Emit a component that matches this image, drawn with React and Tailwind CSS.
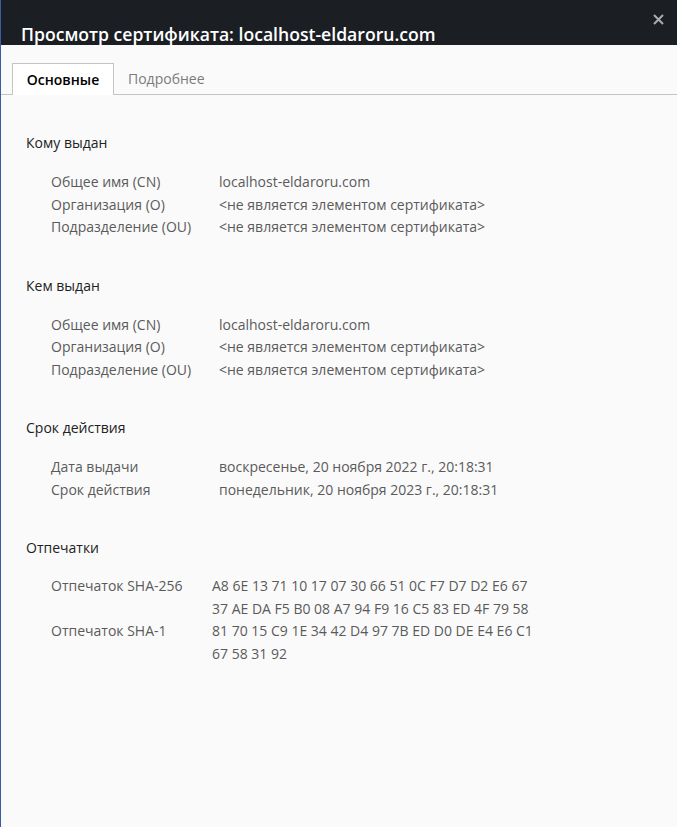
import React from 'react';

const sections = [
  {
    title: 'Кому выдан',
    rows: [
      ['Общее имя (CN)', 'localhost-eldaroru.com'],
      ['Организация (O)', '<не является элементом сертификата>'],
      ['Подразделение (OU)', '<не является элементом сертификата>'],
    ],
  },
  {
    title: 'Кем выдан',
    rows: [
      ['Общее имя (CN)', 'localhost-eldaroru.com'],
      ['Организация (O)', '<не является элементом сертификата>'],
      ['Подразделение (OU)', '<не является элементом сертификата>'],
    ],
  },
  {
    title: 'Срок действия',
    rows: [
      ['Дата выдачи', 'воскресенье, 20 ноября 2022 г., 20:18:31'],
      ['Срок действия', 'понедельник, 20 ноября 2023 г., 20:18:31'],
    ],
  },
];

const fingerprints = [
  ['Отпечаток SHA-256', ['A8 6E 13 71 10 17 07 30 66 51 0C F7 D7 D2 E6 67', '37 AE DA F5 B0 08 A7 94 F9 16 C5 83 ED 4F 79 58']],
  ['Отпечаток SHA-1', ['81 70 15 C9 1E 34 42 D4 97 7B ED D0 DE E4 E6 C1', '67 58 31 92']],
];

const App = () => {
  return (
    <div className="h-[827px] w-[677px] flex flex-col bg-[#fafafa] border-l border-[#3b5ba5] font-['Open_Sans',sans-serif] overflow-hidden">
      {/* Header */}
      <header className="h-[45px] bg-[#1b1e23] relative shrink-0 flex items-end pl-[20px]">
        <h1 className="text-white text-[17.6px] font-semibold leading-[24px] mb-[-1px]">
          Просмотр сертификата: localhost-eldaroru.com
        </h1>
        <button className="absolute right-[11px] top-[11px] w-[16px] h-[16px] flex items-center justify-center">
          <svg width="11" height="11" viewBox="0 0 11 11">
            <path d="M1 1 L10 10 M10 1 L1 10" stroke="#a9acb1" strokeWidth="2" />
          </svg>
        </button>
      </header>

      {/* Tabs */}
      <div className="flex pl-[11px] pt-[18px] border-b border-[#c4c4c4] shrink-0">
        <div className="w-[102px] h-[32px] bg-white border border-b-0 border-[#c4c4c4] flex items-center justify-center text-[14px] font-semibold text-black mb-[-1px]">
          Основные
        </div>
        <div className="px-[14px] h-[31px] flex items-center text-[14px] text-[#7a7a7a]">
          Подробнее
        </div>
      </div>

      {/* Content */}
      <div className="pt-[37px] pl-[25px] text-[14px]">
        {sections.map((s) => (
          <section key={s.title} className="mb-[36px]">
            <h2 className="text-[#222] leading-[22px] mb-[17px]">{s.title}</h2>
            <div className="pl-[25px]">
              {s.rows.map(([k, v], i) => (
                <div key={i} className="flex leading-[22.5px]">
                  <div className="w-[168px] text-[#5a5a5a]">{k}</div>
                  <div className="text-[#5a5a5a]">{v}</div>
                </div>
              ))}
            </div>
          </section>
        ))}
        <section>
          <h2 className="text-[#222] leading-[22px] mb-[16px]">Отпечатки</h2>
          <div className="pl-[25px]">
            {fingerprints.map(([k, lines]) => (
              <div key={k} className="flex leading-[22.6px]">
                <div className="w-[161px] text-[#5a5a5a]">{k}</div>
                <div className="text-[#5a5a5a]">
                  {lines.map((l, i) => (
                    <div key={i}>{l}</div>
                  ))}
                </div>
              </div>
            ))}
          </div>
        </section>
      </div>
    </div>
  );
};

export default App;
